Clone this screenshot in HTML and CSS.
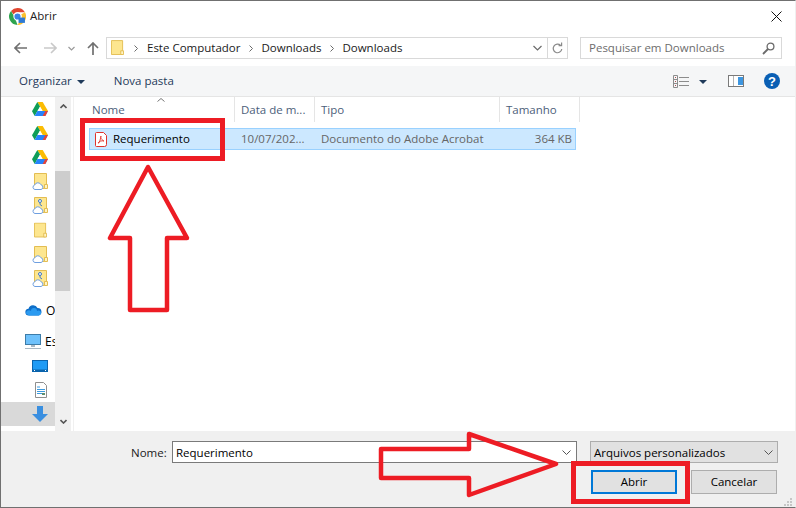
FILE: index.html
```html
<!DOCTYPE html>
<html lang="pt">
<head>
<meta charset="utf-8">
<title>Abrir</title>
<link rel="stylesheet" href="styles.css">
</head>
<body>
<svg class="defs" width="0" height="0">
  <defs>
    <symbol id="drive" viewBox="0 0 16 14">
      <path d="M5.300 0h5.400l5.300 9h-5.300z" fill="#fbbc04"/>
      <path d="M5.300 0l2.700 4.600L2.700 14 0 9.300z" fill="#0f9d58"/>
      <path d="M2.700 14l2.700-5H16l-2.700 5z" fill="#2684fc"/>
      <path d="M13.300 14H10.700l2.600-5H16z" fill="#ea4335"/>
      <path d="M5.600 9L8 4.800 10.400 9z" fill="#fff"/>
    </symbol>
    <symbol id="folder" viewBox="0 0 14 17">
      <path d="M.5.500h12v15H.5z" fill="#fde68f" stroke="#e3bd52"/>
      <path d="M10.500 15.500v-4h3v4z" fill="#fff3c4" stroke="#e3bd52"/>
    </symbol>
    <symbol id="cloud" viewBox="0 0 12 8">
      <path d="M3 7.500a2.300 2.300 0 0 1-.3-4.500A3.400 3.400 0 0 1 9 2.800a2.400 2.400 0 0 1 0 4.700z" fill="#fff" stroke="#6f9fe0"/>
    </symbol>
    <symbol id="person" viewBox="0 0 6 8">
      <circle cx="3" cy="2" r="1.500" fill="#fff" stroke="#3f78c4"/>
      <path d="M3 3.500v2l2 1.500" fill="none" stroke="#3f78c4"/>
    </symbol>
  </defs>
</svg>
<main class="window">
  <header class="titlebar">
    <svg class="chrome" width="17" height="17" viewBox="0 0 16 16">
      <path d="M8 0a8 8 0 0 1 7 4H8a4 4 0 0 0-3.600 2.200L1.900 2.800A8 8 0 0 1 8 0z" fill="#e0452f"/>
      <path d="M1.900 2.800l3.600 6.100 2.500 7A8 8 0 0 1 1.900 2.800z" fill="#2ea44f"/>
      <path d="M15 4a8 8 0 0 1-7 12l3.500-6A4 4 0 0 0 11.400 6z" fill="#fbc02d"/>
      <circle cx="8" cy="8" r="3.400" fill="#3b82e6" stroke="#fff"/>
      <rect x="9" y="9" width="6" height="5" fill="#2d7ad6"/>
    </svg>
    <span class="title">Abrir</span>
    <svg class="close" width="11" height="11" viewBox="0 0 11 11"><path d="M.5.500l10 10M10.500.500l-10 10" stroke="#111" fill="none"/></svg>
  </header>

  <nav class="navbar">
    <svg class="nav-back" width="13" height="12" viewBox="0 0 13 12"><path d="M6 1L1 6l5 5M1 6h12" fill="none" stroke="#707070" stroke-width="1.600"/></svg>
    <svg class="nav-forward" width="13" height="12" viewBox="0 0 13 12"><path d="M7 1l5 5-5 5M12 6H0" fill="none" stroke="#c9c9c9" stroke-width="1.600"/></svg>
    <svg class="nav-down" width="7" height="5" viewBox="0 0 7 5"><path d="M.5 1L3.500 4l3-3" fill="none" stroke="#9a9a9a" stroke-width="1.200"/></svg>
    <svg class="nav-up" width="12" height="13" viewBox="0 0 12 13"><path d="M1 6l5-5 5 5M6 1v12" fill="none" stroke="#707070" stroke-width="1.700"/></svg>
    <div class="address">
      <svg class="addr-folder" width="13" height="16" viewBox="0 0 14 17"><use href="#folder"/></svg>
      <svg class="crumb-sep first" width="4" height="7" viewBox="0 0 4 7"><path d="M.5.500l3 3-3 3" fill="none" stroke="#6b6b6b"/></svg>
      <span class="crumb">Este Computador</span>
      <svg class="crumb-sep" width="4" height="7" viewBox="0 0 4 7"><path d="M.5.500l3 3-3 3" fill="none" stroke="#6b6b6b"/></svg>
      <span class="crumb">Downloads</span>
      <svg class="crumb-sep" width="4" height="7" viewBox="0 0 4 7"><path d="M.5.500l3 3-3 3" fill="none" stroke="#6b6b6b"/></svg>
      <span class="crumb">Downloads</span>
      <svg class="addr-chevron" width="9" height="6" viewBox="0 0 9 6"><path d="M.5 1l4 4 4-4" fill="none" stroke="#6b6b6b" stroke-width="1.200"/></svg>
      <div class="addr-refresh">
        <svg width="11" height="12" viewBox="0 0 11 12"><path d="M8.600 3.400A4.300 4.300 0 1 0 9.800 7M6.600 3.600h3V.6" fill="none" stroke="#8a8a8a" stroke-width="1.200"/></svg>
      </div>
    </div>
    <div class="search">
      <span class="search-text">Pesquisar em Downloads</span>
      <svg width="13" height="13" viewBox="0 0 13 13"><circle cx="8.500" cy="4.500" r="3.400" fill="none" stroke="#6b6b6b" stroke-width="1.300"/><path d="M6 7l-5 5" stroke="#6b6b6b" stroke-width="1.800"/></svg>
    </div>
  </nav>

  <div class="toolbar">
    <span class="tool organize">Organizar</span>
    <svg class="caret" width="8" height="4" viewBox="0 0 8 4"><path d="M0 0h8L4 4z" fill="#1f3a5a"/></svg>
    <span class="tool newfolder">Nova pasta</span>
    <svg class="views" width="16" height="13" viewBox="0 0 16 13">
      <path d="M.5.500h4v12h-4zM.5 4.500h4M.5 8.500h4" fill="none" stroke="#8c8c8c"/>
      <path d="M6 2.500h10M6 6.500h10M6 10.500h10" stroke="#8c8c8c"/>
      <path d="M2 2h1v1H2zM2 6h1v1H2zM2 10h1v1H2z" fill="#b05050"/>
    </svg>
    <svg class="caret views-caret" width="8" height="4" viewBox="0 0 8 4"><path d="M0 0h8L4 4z" fill="#1f3a5a"/></svg>
    <svg class="pane" width="16" height="12" viewBox="0 0 16 12">
      <rect x=".5" y=".5" width="15" height="11" fill="#fff" stroke="#7a7a7a"/>
      <rect x="10" y="2" width="5" height="8" fill="#3d96e0"/>
      <path d="M5.500 1v10" stroke="#b5b5b5"/>
    </svg>
    <svg class="help" width="16" height="16" viewBox="0 0 16 16">
      <circle cx="8" cy="8" r="8" fill="#0a5fb4"/>
      <text x="8" y="12.500" class="help-mark">?</text>
    </svg>
  </div>

  <div class="content">
    <aside class="sidebar">
      <div class="tree">
        <div class="node"><svg width="16" height="14"><use href="#drive"/></svg></div>
        <div class="node"><svg width="16" height="14"><use href="#drive"/></svg></div>
        <div class="node"><svg width="16" height="14"><use href="#drive"/></svg></div>
        <div class="node">
          <span class="stack"><svg width="14" height="17" viewBox="0 0 14 17"><use href="#folder"/></svg><svg class="badge-cloud" width="12" height="8"><use href="#cloud"/></svg></span>
        </div>
        <div class="node">
          <span class="stack"><svg width="14" height="17" viewBox="0 0 14 17"><use href="#folder"/></svg><svg class="badge-cloud" width="12" height="8"><use href="#cloud"/></svg><svg class="badge-person" width="6" height="8"><use href="#person"/></svg></span>
        </div>
        <div class="node"><svg width="13" height="17" viewBox="0 0 14 17"><use href="#folder"/></svg></div>
        <div class="node">
          <span class="stack"><svg width="14" height="17" viewBox="0 0 14 17"><use href="#folder"/></svg><svg class="badge-cloud" width="12" height="8"><use href="#cloud"/></svg></span>
        </div>
        <div class="node">
          <span class="stack"><svg width="14" height="17" viewBox="0 0 14 17"><use href="#folder"/></svg><svg class="badge-cloud" width="12" height="8"><use href="#cloud"/></svg><svg class="badge-person" width="6" height="8"><use href="#person"/></svg></span>
        </div>
        <div class="node wide group">
          <svg width="17" height="11" viewBox="0 0 17 11"><path d="M4 10.500a3.400 3.400 0 0 1-.5-6.800 4.800 4.800 0 0 1 9-.7 3.800 3.800 0 0 1 1 7.500z" fill="#0e6fc9"/><path d="M1 8.500a3 3 0 0 1 5-2.500 3 3 0 0 1 6 0 2.600 2.600 0 0 1 4 3l-2 1.500H4z" fill="#2b9af0"/></svg>
          <span class="node-label">O</span>
        </div>
        <div class="node wide group-pc">
          <svg width="16" height="15" viewBox="0 0 16 15"><rect x=".5" y=".5" width="15" height="10" fill="#6ec1fb" stroke="#3d7ca8"/><path d="M6 11h4v2H6z" fill="#a9b8c4"/><path d="M0 14h16v1H0z" fill="#a9b8c4"/></svg>
          <span class="node-label">Es</span>
        </div>
        <div class="node"><svg width="16" height="12" viewBox="0 0 16 12"><rect x=".5" y=".5" width="15" height="11" fill="#1e9bf5" stroke="#0a64ad"/><path d="M1 9.500h14v2H1z" fill="#0a64ad"/><path d="M2 10h1v1H2zM13 10h1v1h-1z" fill="#fff"/></svg></div>
        <div class="node doc"><svg width="12" height="16" viewBox="0 0 12 16"><path d="M.5.500h8l3 3v12H.5z" fill="#fff" stroke="#8f8f8f"/><path d="M2 5h3M2 7.500h8M2 9.500h8M2 11.500h5" stroke="#3a9ae0"/><path d="M7 11h3v2H7z" fill="#5f8f6f"/></svg></div>
        <div class="node selected"><svg width="16" height="16" viewBox="0 0 16 16"><path d="M5 0h6v8h5l-8 8-8-8h5z" fill="#3a8fe0"/></svg></div>
      </div>
    </aside>
    <div class="scrollbar">
      <svg class="sb-arrow" width="7" height="5" viewBox="0 0 7 5"><path d="M.5 4l3-3 3 3" fill="none" stroke="#555" stroke-width="1.600"/></svg>
      <div class="sb-thumb"></div>
      <svg class="sb-arrow sb-down" width="7" height="5" viewBox="0 0 7 5"><path d="M.5 1l3 3 3-3" fill="none" stroke="#555" stroke-width="1.600"/></svg>
    </div>
    <section class="files">
      <div class="file-head">
        <div class="col col-name">Nome
          <svg class="sort" width="8" height="4" viewBox="0 0 8 4"><path d="M.5 3.500L4 .5l3.500 3" fill="none" stroke="#777"/></svg>
        </div>
        <div class="col col-date">Data de m...</div>
        <div class="col col-type">Tipo</div>
        <div class="col col-size">Tamanho</div>
      </div>
      <div class="file-row">
        <div class="cell-name">
          <svg width="12" height="15" viewBox="0 0 12 15"><path d="M1.500.500h7l3 3v9a2 2 0 0 1-2 2h-8a1 1 0 0 1-1-1v-12a1 1 0 0 1 1-1z" fill="#fff" stroke="#e0332b"/><path d="M6 4c-1 2 1 4 3 5-2-.5-5 0-6 2 1 1 2-2 3-7z" fill="none" stroke="#e0332b" stroke-width=".9"/></svg>
          <span class="row-text">Requerimento</span>
        </div>
        <div class="cell-date row-text">10/07/202...</div>
        <div class="cell-type row-text">Documento do Adobe Acrobat</div>
        <div class="cell-size row-text">364 KB</div>
      </div>
    </section>
  </div>

  <footer class="footer">
    <div class="footer-row">
      <label class="name-label">Nome:</label>
      <div class="name-input">
        <span>Requerimento</span>
        <svg width="9" height="5" viewBox="0 0 9 5"><path d="M.5.500l4 4 4-4" fill="none" stroke="#555"/></svg>
      </div>
      <div class="filter">
        <span>Arquivos personalizados</span>
        <svg width="9" height="5" viewBox="0 0 9 5"><path d="M.5.500l4 4 4-4" fill="none" stroke="#555"/></svg>
      </div>
    </div>
    <div class="footer-row buttons">
      <button class="btn primary">Abrir</button>
      <button class="btn">Cancelar</button>
    </div>
    <svg class="grip" width="9" height="9" viewBox="0 0 9 9"><path d="M7 1h2v2H7zM4 4h2v2H4zM7 4h2v2H7zM1 7h2v2H1zM4 7h2v2H4zM7 7h2v2H7z" fill="#c6c6c6"/></svg>
  </footer>
</main>

<svg class="annotations" width="796" height="508" viewBox="0 0 796 508">
  <rect x="82.500" y="120.500" width="140" height="38"/>
  <rect x="573.500" y="463.500" width="114" height="38"/>
  <path class="thin" d="M148 167L110 238H130V310H167V238H187Z"/>
  <path class="thin" d="M381 449H469V434L556 464L469 495V478H381Z"/>
</svg>
</body>
</html>
```

FILE: styles.css
```css
* { box-sizing: border-box; }

html, body {
  margin: 0;
  padding: 0;
}

body {
  width: 796px;
  height: 508px;
  overflow: hidden;
  position: relative;
  background: #fff;
  font-family: "Open Sans", "Noto Sans", sans-serif;
  font-size: 11.5px;
  color: #000;
}

.defs { position: absolute; }

svg { flex: none; }

.window {
  width: 796px;
  height: 508px;
  display: flex;
  flex-direction: column;
  border: 1px solid #707070;
  border-right-color: #f0f0f0;
  background: #fff;
}

/* title bar */
.titlebar {
  height: 29px;
  flex: none;
  display: flex;
  align-items: center;
  padding: 0 9px 0 8px;
}
.chrome { margin-top: 2px; }
.title { margin-left: 4px; color: #222; }
.close { margin-left: auto; margin-top: 1px; margin-right: 4px; }

/* navigation */
.navbar {
  height: 36px;
  flex: none;
  display: flex;
  align-items: center;
  padding: 0 12px 0 13px;
}
.nav-forward { margin-left: 17px; }
.nav-down { margin-left: 11px; }
.nav-up { margin-left: 12px; }
.address {
  margin-left: 7px;
  width: 462px;
  height: 22px;
  border: 1px solid #d9d9d9;
  display: flex;
  align-items: center;
  padding-left: 4px;
}
.crumb-sep { margin: 0 8px 0 9px; }
.crumb-sep.first { margin: 0 9px 0 10px; }
.crumb { color: #1a1a1a; margin-top: -1px; }
.addr-chevron { margin-left: auto; margin-right: 5px; }
.addr-refresh {
  width: 20px;
  height: 20px;
  border-left: 1px solid #d9d9d9;
  display: flex;
  align-items: center;
  justify-content: center;
}
.search {
  margin-left: 12px;
  width: 202px;
  height: 22px;
  border: 1px solid #d9d9d9;
  display: flex;
  align-items: center;
  justify-content: space-between;
  padding: 0 6px 0 8px;
}
.search-text { color: #6d6d6d; margin-top: -1px; }

/* toolbar */
.toolbar {
  height: 31px;
  flex: none;
  display: flex;
  align-items: center;
  background: #f5f6f7;
  border-bottom: 1px solid #e5e5e5;
  padding-left: 18px;
}
.tool { color: #1f3a5a; margin-top: -1px; }
.caret { margin-left: 5px; margin-top: 1px; }
.newfolder { margin-left: 29px; }
.views { margin-left: auto; }
.views-caret { margin-left: 10px; }
.pane { margin-left: 21px; }
.help { margin-left: 20px; margin-right: 15px; }
.help-mark {
  font-family: "Liberation Sans", sans-serif;
  font-size: 13px;
  font-weight: 700;
  fill: #fff;
  text-anchor: middle;
}

/* main content */
.content {
  flex: 1;
  min-height: 0;
  display: flex;
}
.sidebar {
  width: 54px;
  flex: none;
  overflow: hidden;
}
.tree {
  display: flex;
  flex-direction: column;
}
.node {
  height: 24.200px;
  flex: none;
  display: flex;
  align-items: center;
  justify-content: flex-end;
  padding-right: 7px;
}
.node:nth-child(6),
.node.doc { padding-right: 8px; }
.node.wide {
  justify-content: flex-start;
  padding: 0 0 0 24px;
  white-space: nowrap;
}
.node-label { margin-left: 4px; color: #000; font-size: 12px; }
.group { margin-top: 8px; }
.group-pc { margin-top: 7px; }
.selected { background: #d9d9d9; }
.stack {
  position: relative;
  display: block;
  width: 15px;
  height: 17px;
}
.stack > svg:first-child { position: absolute; right: 0; top: 0; }
.badge-cloud { position: absolute; left: -1px; bottom: 0; }
.badge-person { position: absolute; left: 4px; top: 2px; }

.scrollbar {
  width: 16px;
  flex: none;
  background: #f0f0f0;
  position: relative;
  display: flex;
  flex-direction: column;
  align-items: center;
}
.sb-arrow { margin-top: 7px; }
.sb-thumb {
  width: 15px;
  height: 120px;
  margin: 62px 0 0 -1px;
  background: #cdcdcd;
  flex: none;
}
.sb-down { margin-top: auto; margin-bottom: 7px; }

.files {
  flex: 1;
  min-width: 0;
  margin-left: 2px;
  border-left: 1px solid #f0f0f0;
}
.file-head {
  display: flex;
  height: 25px;
  color: #4c607a;
}
.col {
  height: 25px;
  border-right: 1px solid #e5e5e5;
  display: flex;
  align-items: center;
  padding: 0 0 0 6px;
  white-space: nowrap;
  position: relative;
}
.col-name { width: 161px; padding-left: 18px; }
.col-date { width: 80px; }
.col-type { width: 185px; }
.col-size { width: 80px; }
.sort { position: absolute; left: 83px; top: 1px; }

.file-row {
  margin: 6px 0 0 15px;
  width: 487px;
  height: 22px;
  display: flex;
  align-items: center;
  background: #cce8ff;
  border: 1px solid #99d1ff;
  color: #666;
  white-space: nowrap;
}
.row-text { margin-top: -1px; }
.cell-name {
  width: 145px;
  flex: none;
  display: flex;
  align-items: center;
  gap: 6px;
  padding-left: 5px;
  color: #000;
}
.cell-date { width: 80px; flex: none; padding-left: 6px; }
.cell-type { width: 185px; flex: none; padding-left: 6px; }
.cell-size { flex: 1; text-align: right; padding-right: 3px; }

/* footer */
.footer {
  height: 76px;
  flex: none;
  background: #f0f0f0;
  position: relative;
  display: flex;
  flex-direction: column;
  padding-top: 10px;
}
.footer-row {
  display: flex;
  align-items: center;
}
.name-label { margin-left: 130px; width: 41px; color: #1a1a1a; }
.name-input {
  width: 405px;
  height: 22px;
  background: #fff;
  border: 1px solid #7a7a7a;
  display: flex;
  align-items: center;
  justify-content: space-between;
  padding: 0 5px 0 3px;
}
.filter {
  margin-left: 13px;
  width: 188px;
  height: 22px;
  background: #e1e1e1;
  border: 1px solid #adadad;
  display: flex;
  align-items: center;
  justify-content: space-between;
  padding: 0 4px 0 3px;
}
.buttons {
  margin-top: 7px;
  padding-left: 590px;
  gap: 14px;
}
.btn {
  width: 86px;
  height: 24px;
  padding: 0 0 2px;
  background: #e1e1e1;
  border: 1px solid #adadad;
  font: inherit;
  color: #000;
}
.btn.primary { border: 2px solid #0078d7; }
.grip { position: absolute; right: 3px; bottom: 1px; }

/* red annotations drawn over the screenshot */
.annotations {
  position: absolute;
  left: 0;
  top: 0;
  pointer-events: none;
}
.annotations rect {
  fill: none;
  stroke: #ed1c24;
  stroke-width: 5;
}
.annotations .thin {
  fill: none;
  stroke: #ed1c24;
  stroke-width: 4.500;
  stroke-linejoin: round;
}
```
